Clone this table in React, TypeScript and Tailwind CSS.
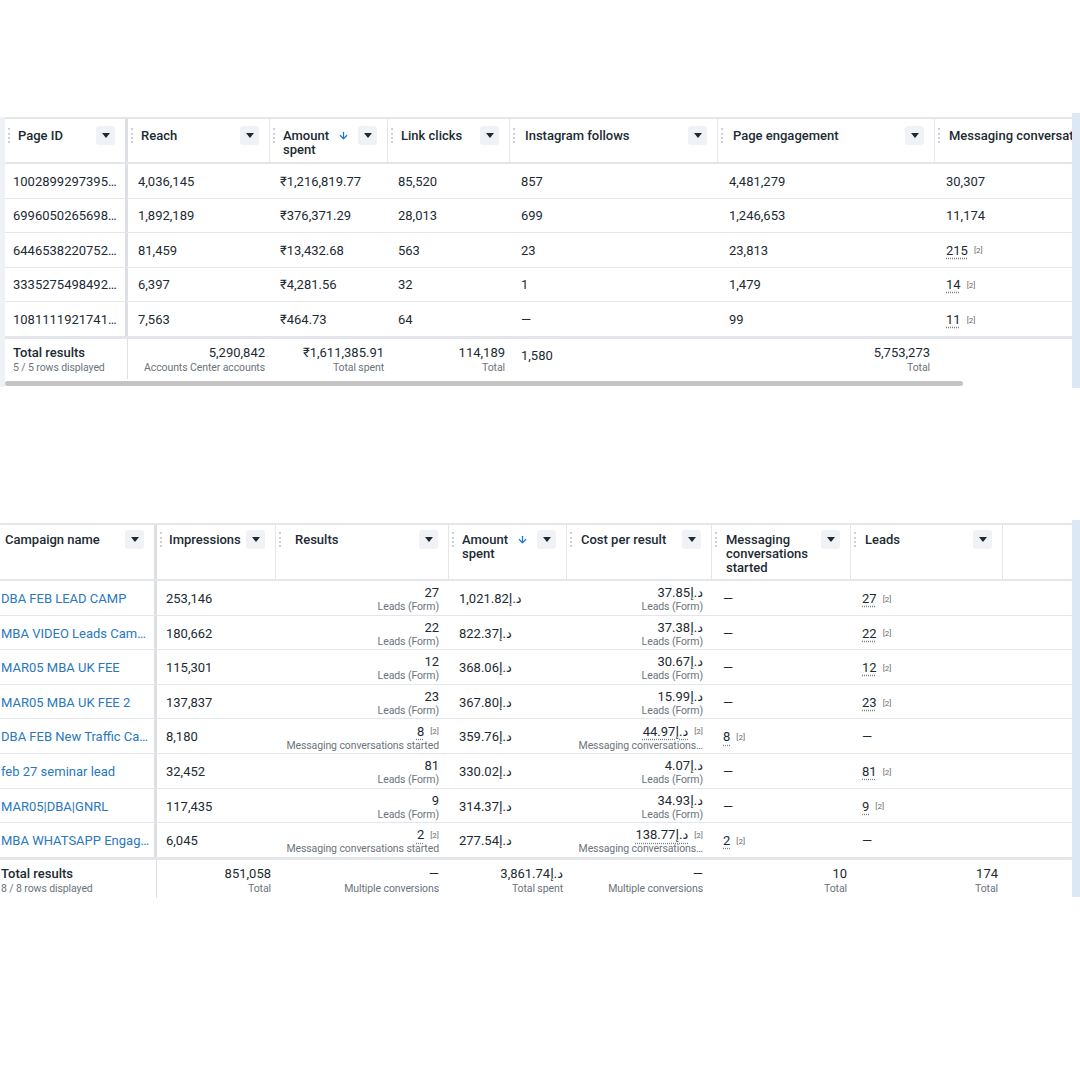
import { ArrowDown } from 'lucide-react';

type Cell =
  | string
  | { v: string; sub?: string; dotted?: boolean; badge?: boolean };

function Caret() {
  return (
    <div className="w-[19px] h-[19px] rounded-[3px] bg-[#f0f2f5] flex items-center justify-center shrink-0">
      <svg width="8" height="5" viewBox="0 0 8 5">
        <path d="M0 0h8L4 5z" fill="#1c2b33" />
      </svg>
    </div>
  );
}

function Grip() {
  return <div className="w-0 h-[15px] mt-[2px] border-l-2 border-dotted border-[#cdd1d5] shrink-0" />;
}

function Value({ c }: { c: Cell }) {
  if (typeof c === 'string') return <span>{c}</span>;
  return (
    <span className="flex items-center">
      <span className={c.dotted ? 'underline decoration-dotted decoration-[#7a8088] underline-offset-[3px]' : ''}>{c.v}</span>
      {c.badge && <span className="ml-[6px] mt-[2px] text-[8px] leading-none text-[#65676b]">[2]</span>}
    </span>
  );
}

function Stack({ c, right }: { c: Cell; right?: boolean }) {
  const sub = typeof c === 'string' ? undefined : c.sub;
  return (
    <div className={`mt-[3px] flex flex-col ${right ? 'items-end text-right' : 'items-start'}`}>
      <div className="text-[13px] leading-[15px]">
        <Value c={c} />
      </div>
      {sub && (
        <div className="text-[10.5px] tracking-[-0.1px] leading-[13px] text-[#6b747d] whitespace-nowrap">{sub}</div>
      )}
    </div>
  );
}

type Head = { label: string; sorted?: boolean; grip?: boolean; labelPl?: string; noCaret?: boolean; nowrap?: boolean };

function HeadCell({ h, sticky, last, top }: { h: Head; sticky?: boolean; last?: boolean; top: boolean }) {
  return (
    <div
      className={`flex items-start pl-[3px] pr-[10px] ${top ? 'pt-[7px]' : 'pt-[5px]'} ${
        sticky ? 'border-r-[3px] border-[#dcdfe3]' : last ? '' : 'border-r border-[#e4e6eb]'
      }`}
    >
      {h.grip !== false ? <Grip /> : <div className="w-[2px]" />}
      <div
        className={`flex-1 ${h.labelPl ?? 'pl-[8px]'} ${top ? 'mt-[3px]' : 'mt-[3px]'} text-[13px] leading-[14px] font-medium ${
          h.nowrap ? 'whitespace-nowrap' : ''
        }`}
      >
        {h.label}
      </div>
      {h.sorted && <ArrowDown size={11} strokeWidth={2.6} className="text-[#1b74e4] mt-[4px] mr-[9px] shrink-0" />}
      {!h.noCaret && <Caret />}
    </div>
  );
}

const topCols = 'grid grid-cols-[123px_142px_118px_122px_208px_217px_240px]';

const topHeads: Head[] = [
  { label: 'Page ID' },
  { label: 'Reach' },
  { label: 'Amount spent', sorted: true },
  { label: 'Link clicks' },
  { label: 'Instagram follows', labelPl: 'pl-[10px]' },
  { label: 'Page engagement', labelPl: 'pl-[10px]' },
  { label: 'Messaging conversations started', noCaret: true, nowrap: true, labelPl: 'pl-[9px]' },
];

const pages: Cell[][] = [
  ['1002899297395…', '4,036,145', '₹1,216,819.77', '85,520', '857', '4,481,279', '30,307'],
  ['6996050265698…', '1,892,189', '₹376,371.29', '28,013', '699', '1,246,653', '11,174'],
  ['6446538220752…', '81,459', '₹13,432.68', '563', '23', '23,813', { v: '215', dotted: true, badge: true }],
  ['3335275498492…', '6,397', '₹4,281.56', '32', '1', '1,479', { v: '14', dotted: true, badge: true }],
  ['1081111921741…', '7,563', '₹464.73', '64', '—', '99', { v: '11', dotted: true, badge: true }],
];

const botCols = 'grid grid-cols-[157px_119px_173px_118px_145px_139px_152px_1fr]';

const botHeads: Head[] = [
  { label: 'Campaign name', grip: false, labelPl: 'pl-[0px]' },
  { label: 'Impressions', labelPl: 'pl-[7px]' },
  { label: 'Results', labelPl: 'pl-[14px]' },
  { label: 'Amount spent', sorted: true, labelPl: 'pl-[8px]' },
  { label: 'Cost per result', labelPl: 'pl-[9px]' },
  { label: 'Messaging conversations started', labelPl: 'pl-[9px]' },
  { label: 'Leads', labelPl: 'pl-[9px]' },
];

const leadsForm = (v: string): Cell => ({ v, sub: 'Leads (Form)' });
const msgResult = (v: string): Cell => ({ v, sub: 'Messaging conversations started', dotted: true, badge: true });
const msgCost = (v: string): Cell => ({ v, sub: 'Messaging conversations…', dotted: true, badge: true });
const dot = (v: string): Cell => ({ v, dotted: true, badge: true });

const campaigns: Cell[][] = [
  ['DBA FEB LEAD CAMP', '253,146', leadsForm('27'), '1,021.82د.إ', leadsForm('37.85د.إ'), '—', dot('27')],
  ['MBA VIDEO Leads Cam…', '180,662', leadsForm('22'), '822.37د.إ', leadsForm('37.38د.إ'), '—', dot('22')],
  ['MAR05 MBA UK FEE', '115,301', leadsForm('12'), '368.06د.إ', leadsForm('30.67د.إ'), '—', dot('12')],
  ['MAR05 MBA UK FEE 2', '137,837', leadsForm('23'), '367.80د.إ', leadsForm('15.99د.إ'), '—', dot('23')],
  ['DBA FEB New Traffic Ca…', '8,180', msgResult('8'), '359.76د.إ', msgCost('44.97د.إ'), dot('8'), '—'],
  ['feb 27 seminar lead', '32,452', leadsForm('81'), '330.02د.إ', leadsForm('4.07د.إ'), '—', dot('81')],
  ['MAR05|DBA|GNRL', '117,435', leadsForm('9'), '314.37د.إ', leadsForm('34.93د.إ'), '—', dot('9')],
  ['MBA WHATSAPP Engag…', '6,045', msgResult('2'), '277.54د.إ', msgCost('138.77د.إ'), dot('2'), '—'],
];

function Total({ v, sub, pr }: { v: string; sub?: string; pr: string }) {
  return (
    <div className={`flex flex-col items-end pt-[6px] ${pr}`}>
      <div className="text-[13px] leading-[16px]">{v}</div>
      {sub && (
        <div className="text-[10.5px] tracking-[-0.1px] leading-[14px] text-[#6b747d] whitespace-nowrap">{sub}</div>
      )}
    </div>
  );
}

function TotalLabel({ rows, pl }: { rows: string; pl: string }) {
  return (
    <div className={`pt-[6px] ${pl} border-r border-[#dcdfe3]`}>
      <div className="text-[13px] leading-[16px] font-medium">Total results</div>
      <div className="text-[10.5px] tracking-[-0.1px] leading-[14px] text-[#6b747d]">{rows}</div>
    </div>
  );
}

export default function App() {
  return (
    <div className="w-[1080px] h-[1080px] bg-white text-[#1c2b33] font-['Roboto','DejaVu_Sans',sans-serif] pt-[113px] overflow-hidden">
      {/* Pages table */}
      <div className="flex h-[275px]">
        <div className="w-[5px] mt-[4px] h-[270px] bg-[#eef1f6]" />
        <div className="w-[1067px] mt-[4px] overflow-hidden">
          <div className={`${topCols} h-[47px] border-y-2 border-[#e4e6eb]`}>
            {topHeads.map((h, i) => (
              <HeadCell key={i} h={h} top sticky={i === 0} last={i === topHeads.length - 1} />
            ))}
          </div>
          {pages.map((row, r) => (
            <div key={r} className={`${topCols} h-[34.6px] border-b border-[#e4e6eb] text-[13px]`}>
              {row.map((c, i) => (
                <div
                  key={i}
                  className={`flex items-center whitespace-nowrap pt-[1px] ${
                    i === 0 ? 'pl-[8px] border-r-[3px] border-[#dcdfe3]' : i >= 4 ? 'pl-[11px]' : 'pl-[10px]'
                  }`}
                >
                  <Value c={c} />
                </div>
              ))}
            </div>
          ))}
          <div className={`${topCols} h-[42px] border-t-2 border-[#e4e6eb]`}>
            <TotalLabel rows="5 / 5 rows displayed" pl="pl-[8px]" />
            <Total v="5,290,842" sub="Accounts Center accounts" pr="pr-[5px]" />
            <Total v="₹1,611,385.91" sub="Total spent" pr="pr-[4px]" />
            <Total v="114,189" sub="Total" pr="pr-[5px]" />
            <div className="pt-[9px] pl-[11px] text-[13px] leading-[16px]">1,580</div>
            <Total v="5,753,273" sub="Total" pr="pr-[5px]" />
            <div />
          </div>
          <div className="mt-[2px] h-[5px] w-[958px] rounded-full bg-[#c4c4c4]" />
        </div>
        <div className="w-[8px] bg-[#dde8f5]" />
      </div>

      {/* Campaigns table */}
      <div className="mt-[132px] flex">
        <div className="w-[1072px] pt-[3px]">
          <div className={`${botCols} h-[58px] border-y-2 border-[#e4e6eb]`}>
            {botHeads.map((h, i) => (
              <HeadCell key={i} h={h} top={false} sticky={i === 0} />
            ))}
            <div />
          </div>
          {campaigns.map((row, r) => (
            <div key={r} className={`${botCols} h-[34.6px] border-b border-[#e4e6eb] text-[13px]`}>
              <div className="flex items-center pt-[2px] pl-[1px] border-r-[3px] border-[#dcdfe3] text-[#2a78bd] whitespace-nowrap">
                <Value c={row[0]} />
              </div>
              <div className="flex items-center pt-[2px] pl-[9px]">
                <Value c={row[1]} />
              </div>
              <div className="flex items-center justify-end pr-[10px]">
                <Stack c={row[2]} right />
              </div>
              <div className="flex items-center pt-[2px] pl-[10px]">
                <Value c={row[3]} />
              </div>
              <div className="flex items-center justify-end pr-[9px]">
                <Stack c={row[4]} right />
              </div>
              <div className="flex items-center pt-[2px] pl-[11px]">
                <Value c={row[5]} />
              </div>
              <div className="flex items-center pt-[2px] pl-[11px]">
                <Value c={row[6]} />
              </div>
              <div />
            </div>
          ))}
          <div className={`${botCols} h-[40px] border-t-2 border-[#e4e6eb]`}>
            <TotalLabel rows="8 / 8 rows displayed" pl="pl-[1px]" />
            <Total v="851,058" sub="Total" pr="pr-[5px]" />
            <Total v="—" sub="Multiple conversions" pr="pr-[10px]" />
            <Total v="3,861.74د.إ" sub="Total spent" pr="pr-[4px]" />
            <Total v="—" sub="Multiple conversions" pr="pr-[9px]" />
            <Total v="10" sub="Total" pr="pr-[4px]" />
            <Total v="174" sub="Total" pr="pr-[5px]" />
            <div />
          </div>
        </div>
        <div className="w-[8px] h-[377px] bg-[#dde8f5]" />
      </div>
    </div>
  );
}
